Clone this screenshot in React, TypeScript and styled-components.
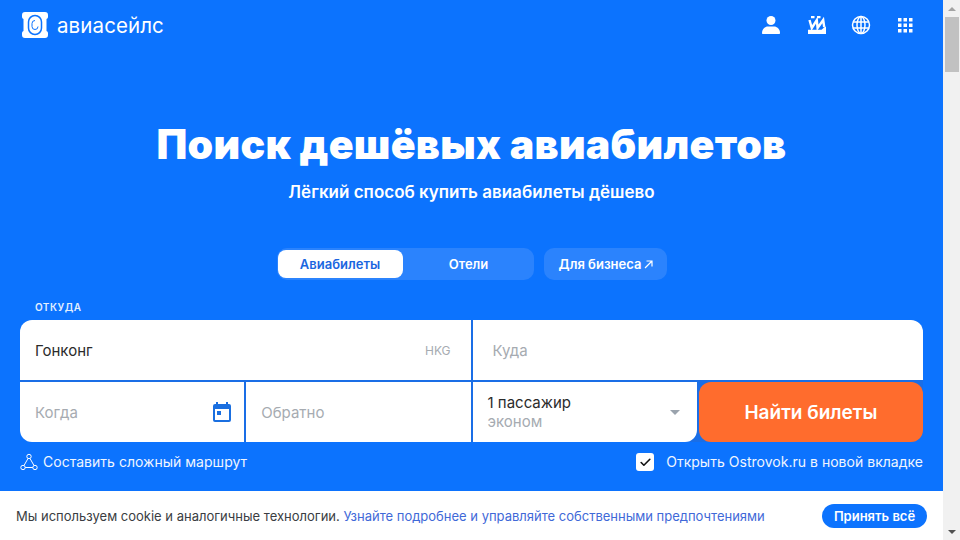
import styled, { createGlobalStyle } from "styled-components";
import { Check } from "lucide-react";

const GlobalStyle = createGlobalStyle`
  html, body {
    margin: 0;
    padding: 0;
    height: 540px;
    overflow: hidden;
    font-family: Inter, "Liberation Sans", sans-serif;
  }
  * { box-sizing: border-box; }
`;

const Page = styled.div`
  display: flex;
  width: 960px;
  height: 540px;
`;
const Main = styled.main`
  width: 943px;
  height: 540px;
  display: flex;
  flex-direction: column;
  background: #0c73fe;
`;

/* header */
const Header = styled.header`
  height: 50px;
  display: flex;
  align-items: center;
  justify-content: space-between;
  padding: 0 28px 0 22px;
`;
const Logo = styled.div`
  display: flex;
  align-items: center;
  gap: 9px;
  color: #fff;
  font-size: 20.5px;
  letter-spacing: 0.1px;
`;
const HeaderIcons = styled.div`
  display: flex;
  align-items: center;
  gap: 24px;
`;
const IconSlot = styled.div<{ $shift?: number }>`
  width: 20px;
  height: 20px;
  display: flex;
  margin-right: ${(p) => p.$shift ?? 0}px;
`;

/* hero */
const Hero = styled.section`
  text-align: center;
  color: #fff;
  padding-top: 69px;
`;
const Title = styled.h1`
  margin: 0;
  font-size: 41px;
  line-height: 50px;
  font-weight: 900;
  letter-spacing: 0.3px;
`;
const Subtitle = styled.p`
  margin: 11px 0 0;
  font-size: 17px;
  line-height: 24px;
  font-weight: 600;
`;

/* tabs */
const TabRow = styled.div`
  display: flex;
  justify-content: center;
  gap: 10px;
  margin-top: 44px;
`;
const TabGroup = styled.div`
  display: flex;
  width: 257px;
  height: 32px;
  padding: 2px 2px 2px 1px;
  border-radius: 10px;
  background: #2b83fd;
`;
const Tab = styled.div<{ $active?: boolean }>`
  flex: ${(p) => (p.$active ? "0 0 125px" : "1")};
  display: flex;
  align-items: center;
  justify-content: center;
  padding-left: ${(p) => (p.$active ? 0 : 3)}px;
  border-radius: 8px;
  font-size: 13px;
  font-weight: 600;
  background: ${(p) => (p.$active ? "#fff" : "transparent")};
  color: ${(p) => (p.$active ? "#1a66e0" : "#fff")};
`;
const BusinessTab = styled.div`
  width: 123px;
  height: 32px;
  display: flex;
  align-items: center;
  justify-content: center;
  gap: 3px;
  padding-left: 2px;
  border-radius: 10px;
  background: #2b83fd;
  color: #fff;
  font-size: 13px;
  font-weight: 600;
`;

/* form */
const FormArea = styled.section`
  padding: 0 20px;
  margin-top: 20px;
`;
const FromLabel = styled.div`
  padding-left: 15px;
  color: #e3efff;
  font-size: 10px;
  line-height: 14px;
  font-weight: 600;
  letter-spacing: 0.5px;
  margin-bottom: 6px;
`;
const Grid = styled.div`
  display: grid;
  grid-template-columns: repeat(4, 1fr);
  grid-template-rows: 60px 60px;
  gap: 2px;
  border-radius: 12px;
  background: #1a6ee6;
`;
const Field = styled.div<{ $span?: number; $radius?: string; $pad?: number; $padRight?: number }>`
  grid-column: span ${(p) => p.$span ?? 1};
  display: flex;
  align-items: center;
  justify-content: space-between;
  background: #fff;
  padding: 0 ${(p) => p.$padRight ?? 20}px 0 ${(p) => p.$pad ?? 15}px;
  border-radius: ${(p) => p.$radius ?? "0"};
  font-size: 15px;
`;
const Value = styled.span`
  color: #2b2b2b;
`;
const Placeholder = styled.span`
  color: #a6abb1;
`;
const Iata = styled.span`
  color: #a6abb1;
  font-size: 12px;
`;
const Stack = styled.div`
  display: flex;
  flex-direction: column;
  line-height: 19.500px;
`;
const Caret = styled.div`
  width: 0;
  height: 0;
  border-left: 5px solid transparent;
  border-right: 5px solid transparent;
  border-top: 5px solid #9aa3ad;
`;
const SearchButton = styled.button`
  border: 0;
  border-radius: 12px;
  background: #ff6c2d;
  color: #fff;
  font-family: inherit;
  font-size: 19px;
  font-weight: 600;
`;
const Options = styled.div`
  display: flex;
  align-items: center;
  justify-content: space-between;
  margin-top: 10px;
  color: #f0f6ff;
  font-size: 14px;
  line-height: 20px;
  letter-spacing: 0.02px;
`;
const OptionGroup = styled.div`
  display: flex;
  align-items: center;
`;
const RouteLabel = styled.span`
  margin-left: 5px;
`;
const CheckBox = styled.div`
  width: 18px;
  height: 18px;
  display: flex;
  align-items: center;
  justify-content: center;
  margin-right: 12px;
  border-radius: 3px;
  background: #fff;
  color: #111;
`;

/* cookie bar */
const CookieBar = styled.footer`
  margin-top: auto;
  height: 49px;
  display: flex;
  align-items: center;
  justify-content: space-between;
  padding: 0 16px;
  background: #fff;
  color: #3a3d42;
  font-size: 13px;
`;
const CookieLink = styled.span`
  color: #3f69d8;
`;
const AcceptButton = styled.button`
  width: 105px;
  height: 24px;
  border: 0;
  border-radius: 12px;
  background: #0c73fe;
  color: #fff;
  font-family: inherit;
  font-size: 13px;
  font-weight: 600;
`;

/* scrollbar */
const Scrollbar = styled.div`
  width: 17px;
  height: 540px;
  display: flex;
  flex-direction: column;
  align-items: center;
  background: #f1f1f1;
`;
const ScrollArrow = styled.div<{ $down?: boolean }>`
  width: 17px;
  height: 17px;
  display: flex;
  align-items: center;
  justify-content: center;
  &::before {
    content: "";
    border-left: 4px solid transparent;
    border-right: 4px solid transparent;
    ${(p) =>
      p.$down ? "border-top: 4px solid #505050;" : "border-bottom: 4px solid #a3a3a3;"}
  }
`;
const ScrollThumb = styled.div`
  width: 14px;
  height: 55px;
  background: #c1c1c1;
`;
const ScrollTrack = styled.div`
  flex: 1;
`;

const LogoMark = () => (
  <svg width="26" height="26" viewBox="0 0 26 26">
    <path
      d="M3 0H23a3 3 0 0 1 3 3v2q0 1.500-1.500 2v12q1.500.5 1.500 2v2a3 3 0 0 1-3 3H3a3 3 0 0 1-3-3v-2q0-1.500 1.500-2V7Q0 6.500 0 5V3a3 3 0 0 1 3-3z"
      fill="#fff"
    />
    <rect x="6.500" y="3.500" width="13" height="19" rx="6.500" fill="none" stroke="#0c73fe" strokeWidth="1.500" />
    <path d="M13 8.500a3 3 0 0 0-3 3v3a3 3 0 0 0 6 0" fill="none" stroke="#0c73fe" strokeWidth="1" />
  </svg>
);

const UserIcon = () => (
  <svg width="20" height="20" viewBox="0 0 20 20" fill="#fff">
    <circle cx="10" cy="5.500" r="4.500" />
    <path d="M1 18c0-4 3-6.500 6-6.500h6c3 0 6 2.500 6 6.500 0 .6-.4 1-1 1H2c-.6 0-1-.4-1-1z" />
  </svg>
);

const TicketsIcon = () => (
  <svg width="20" height="20" viewBox="0 0 20 20">
    <path d="M4 1h3.500v2.200H4zM10 1h3.500v2.200H10z" fill="#fff" />
    <path d="M2.500 5l2.300 8 5-8 .8 8 5.600-8 1 7" fill="none" stroke="#fff" strokeWidth="2.400" />
    <path d="M1 14.800h13.500l3.500-3h1V19H1z" fill="#fff" />
  </svg>
);

const GlobeIcon = () => (
  <svg width="20" height="20" viewBox="0 0 20 20" fill="none" stroke="#fff" strokeWidth="1.500">
    <circle cx="10" cy="10" r="8.500" />
    <ellipse cx="10" cy="10" rx="4" ry="8.500" />
    <path d="M10 1.500v17M2 7h16M2 13h16" />
  </svg>
);

const GridIcon = () => (
  <svg width="20" height="20" viewBox="0 0 20 20" fill="#fff">
    {[3, 8.500, 14].map((y) =>
      [3, 8.500, 14].map((x) => <rect key={`${x}-${y}`} x={x} y={y} width="3.500" height="3.500" />)
    )}
  </svg>
);

const ArrowIcon = () => (
  <svg width="9" height="9" viewBox="0 0 9 9" fill="none" stroke="#fff" strokeWidth="1.200">
    <path d="M1 8l7-7M2.500 1H8v5.500" />
  </svg>
);

const CalendarIcon = () => (
  <svg width="20" height="20" viewBox="0 0 20 20" fill="#1a6fe0">
    <path d="M4 0h2v2h8V0h2v2h1a2 2 0 0 1 2 2v14a2 2 0 0 1-2 2H3a2 2 0 0 1-2-2V4a2 2 0 0 1 2-2h1zM3 7v11h14V7z" />
    <rect x="5" y="9" width="4" height="4" />
  </svg>
);

const RouteIcon = () => (
  <svg width="18" height="18" viewBox="0 0 18 18" fill="none" stroke="#fff" strokeWidth="1">
    <circle cx="9" cy="3.500" r="2.200" />
    <circle cx="3" cy="14.500" r="2.200" />
    <circle cx="15" cy="14.500" r="2.200" />
    <path d="M8 5.500L4 12.500M10 5.500l4 7M5.200 14.500h7.600" />
  </svg>
);

export default function App() {
  return (
    <>
      <GlobalStyle />
      <Page>
        <Main>
          <Header>
            <Logo>
              <LogoMark />
              <span>авиасейлс</span>
            </Logo>
            <HeaderIcons>
              <IconSlot $shift={2}><UserIcon /></IconSlot>
              <IconSlot><TicketsIcon /></IconSlot>
              <IconSlot><GlobeIcon /></IconSlot>
              <IconSlot><GridIcon /></IconSlot>
            </HeaderIcons>
          </Header>
          <Hero>
            <Title>Поиск дешёвых авиабилетов</Title>
            <Subtitle>Лёгкий способ купить авиабилеты дёшево</Subtitle>
          </Hero>
          <TabRow>
            <TabGroup>
              <Tab $active>Авиабилеты</Tab>
              <Tab>Отели</Tab>
            </TabGroup>
            <BusinessTab>
              Для бизнеса
              <ArrowIcon />
            </BusinessTab>
          </TabRow>
          <FormArea>
            <FromLabel>ОТКУДА</FromLabel>
            <Grid>
              <Field $span={2} $radius="12px 0 0 0">
                <Value>Гонконг</Value>
                <Iata>HKG</Iata>
              </Field>
              <Field $span={2} $radius="0 12px 0 0" $pad={20}>
                <Placeholder>Куда</Placeholder>
              </Field>
              <Field $radius="0 0 0 12px" $padRight={12}>
                <Placeholder>Когда</Placeholder>
                <CalendarIcon />
              </Field>
              <Field>
                <Placeholder>Обратно</Placeholder>
              </Field>
              <Field $radius="0 0 12px 0" $padRight={17}>
                <Stack>
                  <Value>1 пассажир</Value>
                  <Placeholder>эконом</Placeholder>
                </Stack>
                <Caret />
              </Field>
              <SearchButton>Найти билеты</SearchButton>
            </Grid>
            <Options>
              <OptionGroup>
                <RouteIcon />
                <RouteLabel>Составить сложный маршрут</RouteLabel>
              </OptionGroup>
              <OptionGroup>
                <CheckBox><Check size={13} strokeWidth={3} /></CheckBox>
                <span>Открыть Ostrovok.ru в новой вкладке</span>
              </OptionGroup>
            </Options>
          </FormArea>
          <CookieBar>
            <span>
              Мы используем cookie и аналогичные технологии.{" "}
              <CookieLink>Узнайте подробнее и управляйте собственными предпочтениями</CookieLink>
            </span>
            <AcceptButton>Принять всё</AcceptButton>
          </CookieBar>
        </Main>
        <Scrollbar>
          <ScrollArrow />
          <ScrollThumb />
          <ScrollTrack />
          <ScrollArrow $down />
        </Scrollbar>
      </Page>
    </>
  );
}
